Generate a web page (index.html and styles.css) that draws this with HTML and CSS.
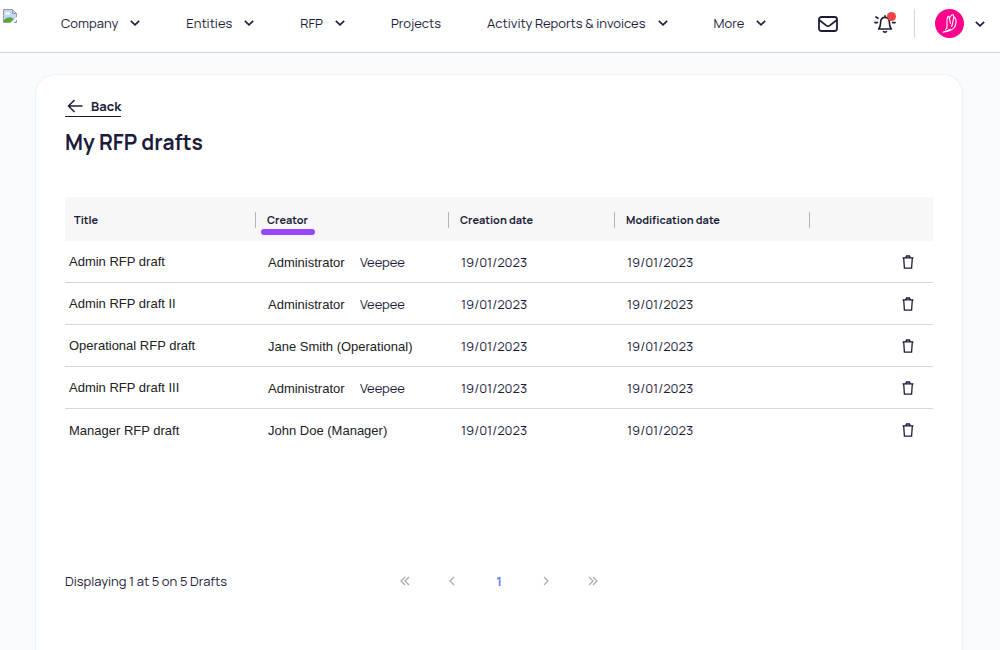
FILE: index.html
```html
<!DOCTYPE html>
<html lang="en">
  <head>
    <meta charset="UTF-8" />
    <meta name="viewport" content="width=device-width, initial-scale=1.0" />
    <title>My RFP drafts</title>
    <link rel="stylesheet" href="styles.css">
  </head>
  <body>
    <!-- shared icons -->
    <svg class="sprite" aria-hidden="true">
      <symbol id="chevron" viewBox="0 0 10 6">
        <path d="M0.8 0.8 L5 4.8 L9.2 0.8" />
      </symbol>
      <symbol id="trash" viewBox="0 0 12 14">
        <path d="M0.5 2.9 H11.5 M3.8 2.6 L4.5 1 H7.5 L8.2 2.6 M1.7 3 L2.4 13.2 H9.6 L10.3 3" />
      </symbol>
    </svg>

    <header class="topbar">
      <a class="logo" href="#" aria-label="Home">
        <svg width="16" height="16" viewBox="0 0 16 16">
          <path d="M1.5 1.5 H10.5 L14.5 5.5 V14.5 H1.5 Z" fill="#c6d7f5" />
          <path d="M3 6.5 Q3 5 4.5 5 Q5 3.5 6.5 4 Q8 4.5 8 6.5 Z" fill="#fff" />
          <path d="M2 14 V12 Q5 8.5 9 9.5 L12 11 L9 14 Z" fill="#54a93a" />
          <path d="M8 15.5 L15.5 8.5 V11 L11 15.5 Z" fill="#fff" />
          <path d="M8.5 14.5 H1.5 V1.5 H10.5 L14.5 5.5 V9 M10.5 1.5 V5.5 H14.5 M14.5 12 V14.5 H12" fill="none" stroke="#9a9a9a" />
        </svg>
      </a>
      <nav class="nav">
        <button class="nav-item" type="button">Company <svg class="chevron"><use href="#chevron" /></svg></button>
        <button class="nav-item" type="button">Entities <svg class="chevron"><use href="#chevron" /></svg></button>
        <button class="nav-item" type="button">RFP <svg class="chevron"><use href="#chevron" /></svg></button>
        <a class="nav-item" href="#">Projects</a>
        <button class="nav-item" type="button">Activity Reports &amp; invoices <svg class="chevron"><use href="#chevron" /></svg></button>
        <button class="nav-item" type="button">More <svg class="chevron"><use href="#chevron" /></svg></button>
      </nav>
      <div class="tools">
        <button class="icon-button" type="button" aria-label="Messages">
          <svg width="20" height="16" viewBox="0 0 20 16" fill="none" stroke="#1c1c3a" stroke-width="1.8" stroke-linejoin="round">
            <rect x="1" y="1" width="18" height="14" rx="2.5" />
            <path d="M1.5 4.2 L8.4 9.6 Q10 10.8 11.6 9.6 L18.5 4.2" />
          </svg>
        </button>
        <button class="icon-button bell" type="button" aria-label="Notifications">
          <svg width="22" height="18" viewBox="0 0 22 18" fill="none" stroke="#1c1c3a" stroke-width="1.6" stroke-linecap="round" stroke-linejoin="round">
            <path d="M11 0.8 V2 M4.6 14 H17.4 M4.8 13.6 C6.6 12 6.4 10 6.6 7.2 C6.8 4 8.6 2.4 11 2.4 C13.4 2.4 15.2 4 15.4 7.2 C15.6 10 15.4 12 17.2 13.6" />
            <path d="M9.6 16.6 Q11 17.6 12.4 16.6" />
            <path d="M0.9 7.6 H3.4 M1.9 2 L4 3.3 M18.6 7.6 H21.1 M20.1 2 L18 3.3" />
          </svg>
          <span class="dot"></span>
        </button>
        <button class="account" type="button" aria-label="Account">
          <svg width="29" height="29" viewBox="0 0 29 29">
            <circle cx="14.5" cy="14.5" r="14.5" fill="#ff008c" />
            <path d="M11.7 19.5 C12.9 16 11 11.5 12.6 8 Q13.6 6.4 14.2 8.4 L15.4 14.5 M14.4 9.8 C15.4 7 17.5 5 18.4 6 C19.6 8 17.4 14 16.8 17.5 M19.4 8.2 C22.2 10 21 15.6 19.6 18 C17 21.8 12.5 22.8 8 23.2 C10.6 22.4 13.4 21.6 15.2 20.2" fill="none" stroke="#fff" stroke-width="1.1" stroke-linecap="round" stroke-linejoin="round" />
            <path d="M10 20.5 Q11.5 19.8 12 18.6" fill="none" stroke="#fff" stroke-width="1.1" />
          </svg>
          <svg class="chevron"><use href="#chevron" /></svg>
        </button>
      </div>
    </header>

    <main class="card">
      <a class="back" href="#">
        <svg width="16" height="14" viewBox="0 0 16 14" fill="none" stroke="#1c1c3a" stroke-width="1.5">
          <path d="M15.5 7 H1.5 M7.5 1 L1.5 7 L7.5 13" />
        </svg>
        Back
      </a>
      <h1>My RFP drafts</h1>

      <table class="drafts">
        <colgroup>
          <col class="col-title" />
          <col class="col-creator" />
          <col class="col-created" />
          <col class="col-modified" />
          <col />
        </colgroup>
        <thead>
          <tr>
            <th scope="col"><span>Title</span></th>
            <th scope="col"><span class="highlight">Creator</span></th>
            <th scope="col"><span>Creation date</span></th>
            <th scope="col"><span>Modification date</span></th>
            <th scope="col" aria-label="Actions"><span></span></th>
          </tr>
        </thead>
        <tbody>
          <tr>
            <td class="title">Admin RFP draft</td>
            <td><span class="name">Administrator</span><span class="company">Veepee</span></td>
            <td>19/01/2023</td>
            <td>19/01/2023</td>
            <td class="actions"><button type="button" aria-label="Delete"><svg><use href="#trash" /></svg></button></td>
          </tr>
          <tr>
            <td class="title">Admin RFP draft II</td>
            <td><span class="name">Administrator</span><span class="company">Veepee</span></td>
            <td>19/01/2023</td>
            <td>19/01/2023</td>
            <td class="actions"><button type="button" aria-label="Delete"><svg><use href="#trash" /></svg></button></td>
          </tr>
          <tr>
            <td class="title">Operational RFP draft</td>
            <td><span class="name">Jane Smith (Operational)</span></td>
            <td>19/01/2023</td>
            <td>19/01/2023</td>
            <td class="actions"><button type="button" aria-label="Delete"><svg><use href="#trash" /></svg></button></td>
          </tr>
          <tr>
            <td class="title">Admin RFP draft III</td>
            <td><span class="name">Administrator</span><span class="company">Veepee</span></td>
            <td>19/01/2023</td>
            <td>19/01/2023</td>
            <td class="actions"><button type="button" aria-label="Delete"><svg><use href="#trash" /></svg></button></td>
          </tr>
          <tr>
            <td class="title">Manager RFP draft</td>
            <td><span class="name">John Doe (Manager)</span></td>
            <td>19/01/2023</td>
            <td>19/01/2023</td>
            <td class="actions"><button type="button" aria-label="Delete"><svg><use href="#trash" /></svg></button></td>
          </tr>
        </tbody>
      </table>

      <footer class="table-footer">
        <p>Displaying 1 at 5 on 5 Drafts</p>
        <div class="pager">
          <button type="button" aria-label="First page"><svg viewBox="0 0 10 10"><path d="M5 1 L1 5 L5 9 M9 1 L5 5 L9 9" /></svg></button>
          <button type="button" aria-label="Previous page"><svg viewBox="0 0 10 10"><path d="M7 1 L3 5 L7 9" /></svg></button>
          <button type="button" class="current">1</button>
          <button type="button" aria-label="Next page"><svg viewBox="0 0 10 10"><path d="M3 1 L7 5 L3 9" /></svg></button>
          <button type="button" aria-label="Last page"><svg viewBox="0 0 10 10"><path d="M1 1 L5 5 L1 9 M5 1 L9 5 L5 9" /></svg></button>
        </div>
      </footer>
    </main>
  </body>
</html>
```
FILE: styles.css
```css
* {
  box-sizing: border-box;
}

body {
  margin: 0;
  min-height: 100vh;
  display: flex;
  flex-direction: column;
  background-color: #f8fcff;
  color: #1c1c3a;
  font-family: Manrope, Inter, sans-serif;
  font-size: 13px;
}

button {
  padding: 0;
  border: 0;
  background: none;
  color: inherit;
  font: inherit;
  cursor: pointer;
}

a {
  color: inherit;
  text-decoration: none;
}

svg {
  display: block;
}

.sprite {
  position: absolute;
  width: 0;
  height: 0;
}

.topbar {
  display: flex;
  align-items: center;
  height: 53px;
  padding: 0 15px 5px 2px;
  background: #fff;
  border-bottom: 1px solid #d4d3db;
}

.logo {
  align-self: flex-start;
  margin-top: 8px;
}

.nav {
  display: flex;
  gap: 46px;
  margin-left: 43px;
  padding-bottom: 2px;
}

.nav-item {
  display: flex;
  align-items: center;
  gap: 12px;
  white-space: nowrap;
}

.chevron {
  width: 10px;
  height: 6px;
  fill: none;
  stroke: #1c1c3a;
  stroke-width: 1.6;
}

.tools {
  display: flex;
  align-items: center;
  margin-left: auto;
}

.bell {
  position: relative;
  margin: 0 18px 0 36px;
}

.dot {
  position: absolute;
  top: -3px;
  right: 0;
  width: 9px;
  height: 9px;
  border-radius: 50%;
  background: #f04444;
}

.account {
  display: flex;
  align-items: center;
  gap: 11px;
  padding-left: 20px;
  border-left: 1px solid #d4d3db;
}

.card {
  flex: 1;
  margin: 21px 37px 0 35px;
  padding: 22px 29px;
  background: #fff;
  border: 1px solid #eff1f3;
  border-bottom: 0;
  border-radius: 20px 20px 0 0;
}

.back {
  display: inline-flex;
  align-items: center;
  gap: 8px;
  height: 20px;
  padding: 0 0 2px 2px;
  border-bottom: 1px solid #1c1c3a;
  font-weight: 700;
}

h1 {
  margin: 11px 0 41px;
  font-size: 21px;
  line-height: 28px;
  font-weight: 700;
}

.drafts {
  width: 100%;
  table-layout: fixed;
  border-collapse: separate;
  border-spacing: 0;
}

.col-title {
  width: 190px;
}

.col-creator {
  width: 193px;
}

.col-created {
  width: 166px;
}

.col-modified {
  width: 195px;
}

.drafts th {
  height: 44px;
  padding: 2px 0 0;
  background: #f7f7f7;
  font-size: 11px;
  font-weight: 700;
  line-height: 16px;
  text-align: left;
}

.drafts th span {
  position: relative;
  display: block;
  min-height: 16px;
  padding-left: 11px;
  border-left: 1px solid #b4b4bd;
}

.drafts th:first-child span {
  padding-left: 9px;
  border-left: 0;
}

/* marks the sorted column */
.drafts .highlight::after {
  content: "";
  position: absolute;
  left: 5px;
  top: 17px;
  width: 54px;
  height: 6px;
  border-radius: 3px;
  background: #9747ff;
}

.drafts td {
  height: 42px;
  padding: 0 0 0 13px;
  border-bottom: 1px solid #d6d6d6;
  white-space: nowrap;
}

.drafts tr:last-child td {
  border-bottom: 0;
}

.drafts .title,
.name {
  color: #222;
  font-family: "Liberation Sans", Arial, sans-serif;
  font-size: 13px;
}

.drafts .title {
  padding-left: 4px;
}

.name {
  display: inline-block;
  min-width: 92px;
}

.drafts .actions {
  padding-right: 19px;
}

.actions button {
  display: block;
  margin-left: auto;
}

.actions svg {
  width: 12px;
  height: 14px;
  fill: none;
  stroke: #1c1c3a;
  stroke-width: 1.3;
}

.table-footer {
  display: grid;
  grid-template-columns: 1fr auto 1fr;
  align-items: center;
  margin-top: 118px;
}

.table-footer p {
  margin: 0;
}

.pager {
  display: flex;
}

.pager button {
  display: flex;
  align-items: center;
  justify-content: center;
  width: 47px;
  height: 24px;
}

.pager svg {
  width: 10px;
  height: 10px;
  fill: none;
  stroke: #a9a9a9;
  stroke-width: 1.2;
}

.pager .current {
  color: #6d84ea;
  font-weight: 700;
}
```
